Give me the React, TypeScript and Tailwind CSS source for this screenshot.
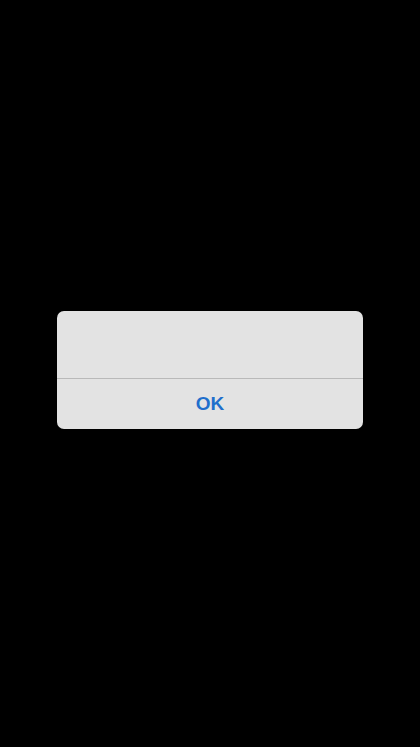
export default function App() {
  return (
    <div className="min-h-[747px] w-full bg-black flex justify-center pt-[311px]" style={{ fontFamily: '"Liberation Sans", Arial, sans-serif' }}>
      <div className="w-[306px] h-[118px] rounded-[7px] bg-[#e3e3e3] flex flex-col overflow-hidden">
        <div className="h-[68px] border-b border-[#b9b9b9]" />
        <button className="flex-1 flex items-center justify-center text-[19px] font-bold text-[#1f6fcc]">
          OK
        </button>
      </div>
    </div>
  );
}
